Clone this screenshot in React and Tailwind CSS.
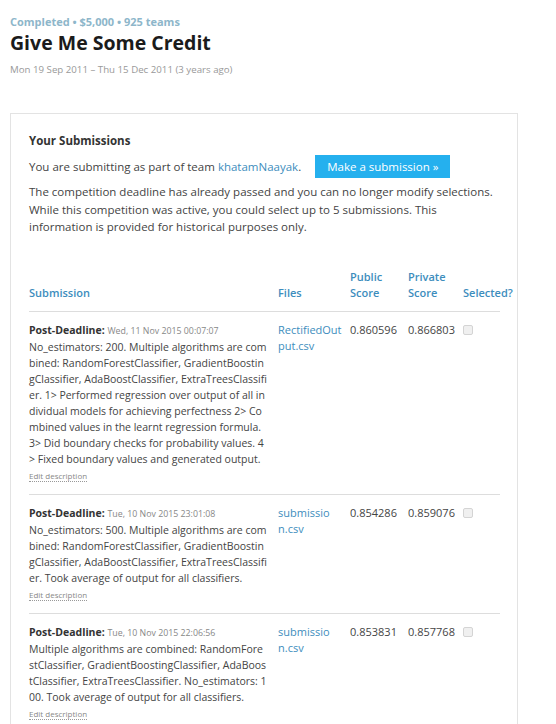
import React from 'react';

const submissions = [
  {
    date: 'Wed, 11 Nov 2015 00:07:07',
    text: 'No_estimators: 200. Multiple algorithms are combined: RandomForestClassifier, GradientBoostingClassifier, AdaBoostClassifier, ExtraTreesClassifier. 1> Performed regression over output of all individual models for achieving perfectness 2> Combined values in the learnt regression formula. 3> Did boundary checks for probability values. 4> Fixed boundary values and generated output.',
    file: ['RectifiedOut', 'put.csv'],
    pub: '0.860596',
    priv: '0.866803',
  },
  {
    date: 'Tue, 10 Nov 2015 23:01:08',
    text: 'No_estimators: 500. Multiple algorithms are combined: RandomForestClassifier, GradientBoostingClassifier, AdaBoostClassifier, ExtraTreesClassifier. Took average of output for all classifiers.',
    file: ['submissio', 'n.csv'],
    pub: '0.854286',
    priv: '0.859076',
  },
  {
    date: 'Tue, 10 Nov 2015 22:06:56',
    text: 'Multiple algorithms are combined: RandomForestClassifier, GradientBoostingClassifier, AdaBoostClassifier, ExtraTreesClassifier. No_estimators: 100. Took average of output for all classifiers.',
    file: ['submissio', 'n.csv'],
    pub: '0.853831',
    priv: '0.857768',
  },
];

const App = () => {
  return (
    <div className="min-h-screen bg-white font-['Open_Sans',sans-serif] text-[#444] pl-[10px] pt-[15px]">
      {/* Competition header */}
      <p className="text-[11px] font-bold text-[#8db6ca] leading-[14px]">
        Completed • $5,000 • 925 teams
      </p>
      <h1 className="text-[19.5px] font-bold text-[#1b1b1b] leading-[26px] mt-[1px]">
        Give Me Some Credit
      </h1>
      <p className="text-[9.7px] text-[#999] leading-[14px] mt-[7px]">
        Mon 19 Sep 2011 – Thu 15 Dec 2011 (3 years ago)
      </p>

      {/* Submissions box */}
      <div className="mt-[36px] w-[508px] border border-[#e3e3e3] px-[18px] pt-[18px]">
        <h2 className="text-[11.5px] font-bold text-[#333] leading-[18px]">Your Submissions</h2>

        <div className="flex items-center mt-[5px] text-[11.5px]">
          <span>
            You are submitting as part of team{' '}
            <a className="text-[#3d8dbd]">khatamNaayak</a>.
          </span>
          <button className="ml-[14px] h-[23px] px-[12px] bg-[#25b0ee] text-white text-[11.5px] leading-none">
            Make a submission »
          </button>
        </div>

        <p className="text-[11.5px] leading-[17.5px] mt-[5px]">
          The competition deadline has already passed and you can no longer modify selections.
          While this competition was active, you could select up to 5 submissions. This
          information is provided for historical purposes only.
        </p>

        <table className="mt-[33px] w-[471px] table-fixed border-collapse text-[10.5px]">
          <colgroup>
            <col className="w-[249px]" />
            <col className="w-[72px]" />
            <col className="w-[58px]" />
            <col className="w-[55px]" />
            <col />
          </colgroup>
          <thead>
            <tr className="text-left align-bottom text-[#3d8dbd] text-[11px] leading-[16px] border-b border-[#ddd]">
              <th className="pb-[10px] font-semibold">Submission</th>
              <th className="pb-[10px] font-semibold">Files</th>
              <th className="pb-[10px] font-semibold">Public<br />Score</th>
              <th className="pb-[10px] font-semibold">Private<br />Score</th>
              <th className="pb-[10px] font-semibold whitespace-nowrap">Selected?</th>
            </tr>
          </thead>
          <tbody>
            {submissions.map((s, i) => (
              <tr key={i} className="align-top border-b border-[#ddd] leading-[16px]">
                <td className="pt-[10px] pb-[10px] pr-[11px]">
                  <div>
                    <span className="font-bold text-[#333]">Post-Deadline:</span>{' '}
                    <span className="text-[8.8px] text-[#888]">{s.date}</span>
                  </div>
                  <div className="break-all">{s.text}</div>
                  <div className="leading-[16px]">
                    <span className="text-[8px] text-[#888] border-b border-dotted border-[#999]">
                      Edit description
                    </span>
                  </div>
                </td>
                <td className="pt-[10px] text-[11px] text-[#3d8dbd]">
                  {s.file.map((part, j) => (
                    <div key={j}>{part}</div>
                  ))}
                </td>
                <td className="pt-[10px] text-[11px]">{s.pub}</td>
                <td className="pt-[10px] text-[11px]">{s.priv}</td>
                <td className="pt-[13px]">
                  <span className="block w-[10px] h-[10px] rounded-[2px] border border-[#d4d4d4] bg-[#f0f0f0]" />
                </td>
              </tr>
            ))}
          </tbody>
        </table>
      </div>
    </div>
  );
};

export default App;
